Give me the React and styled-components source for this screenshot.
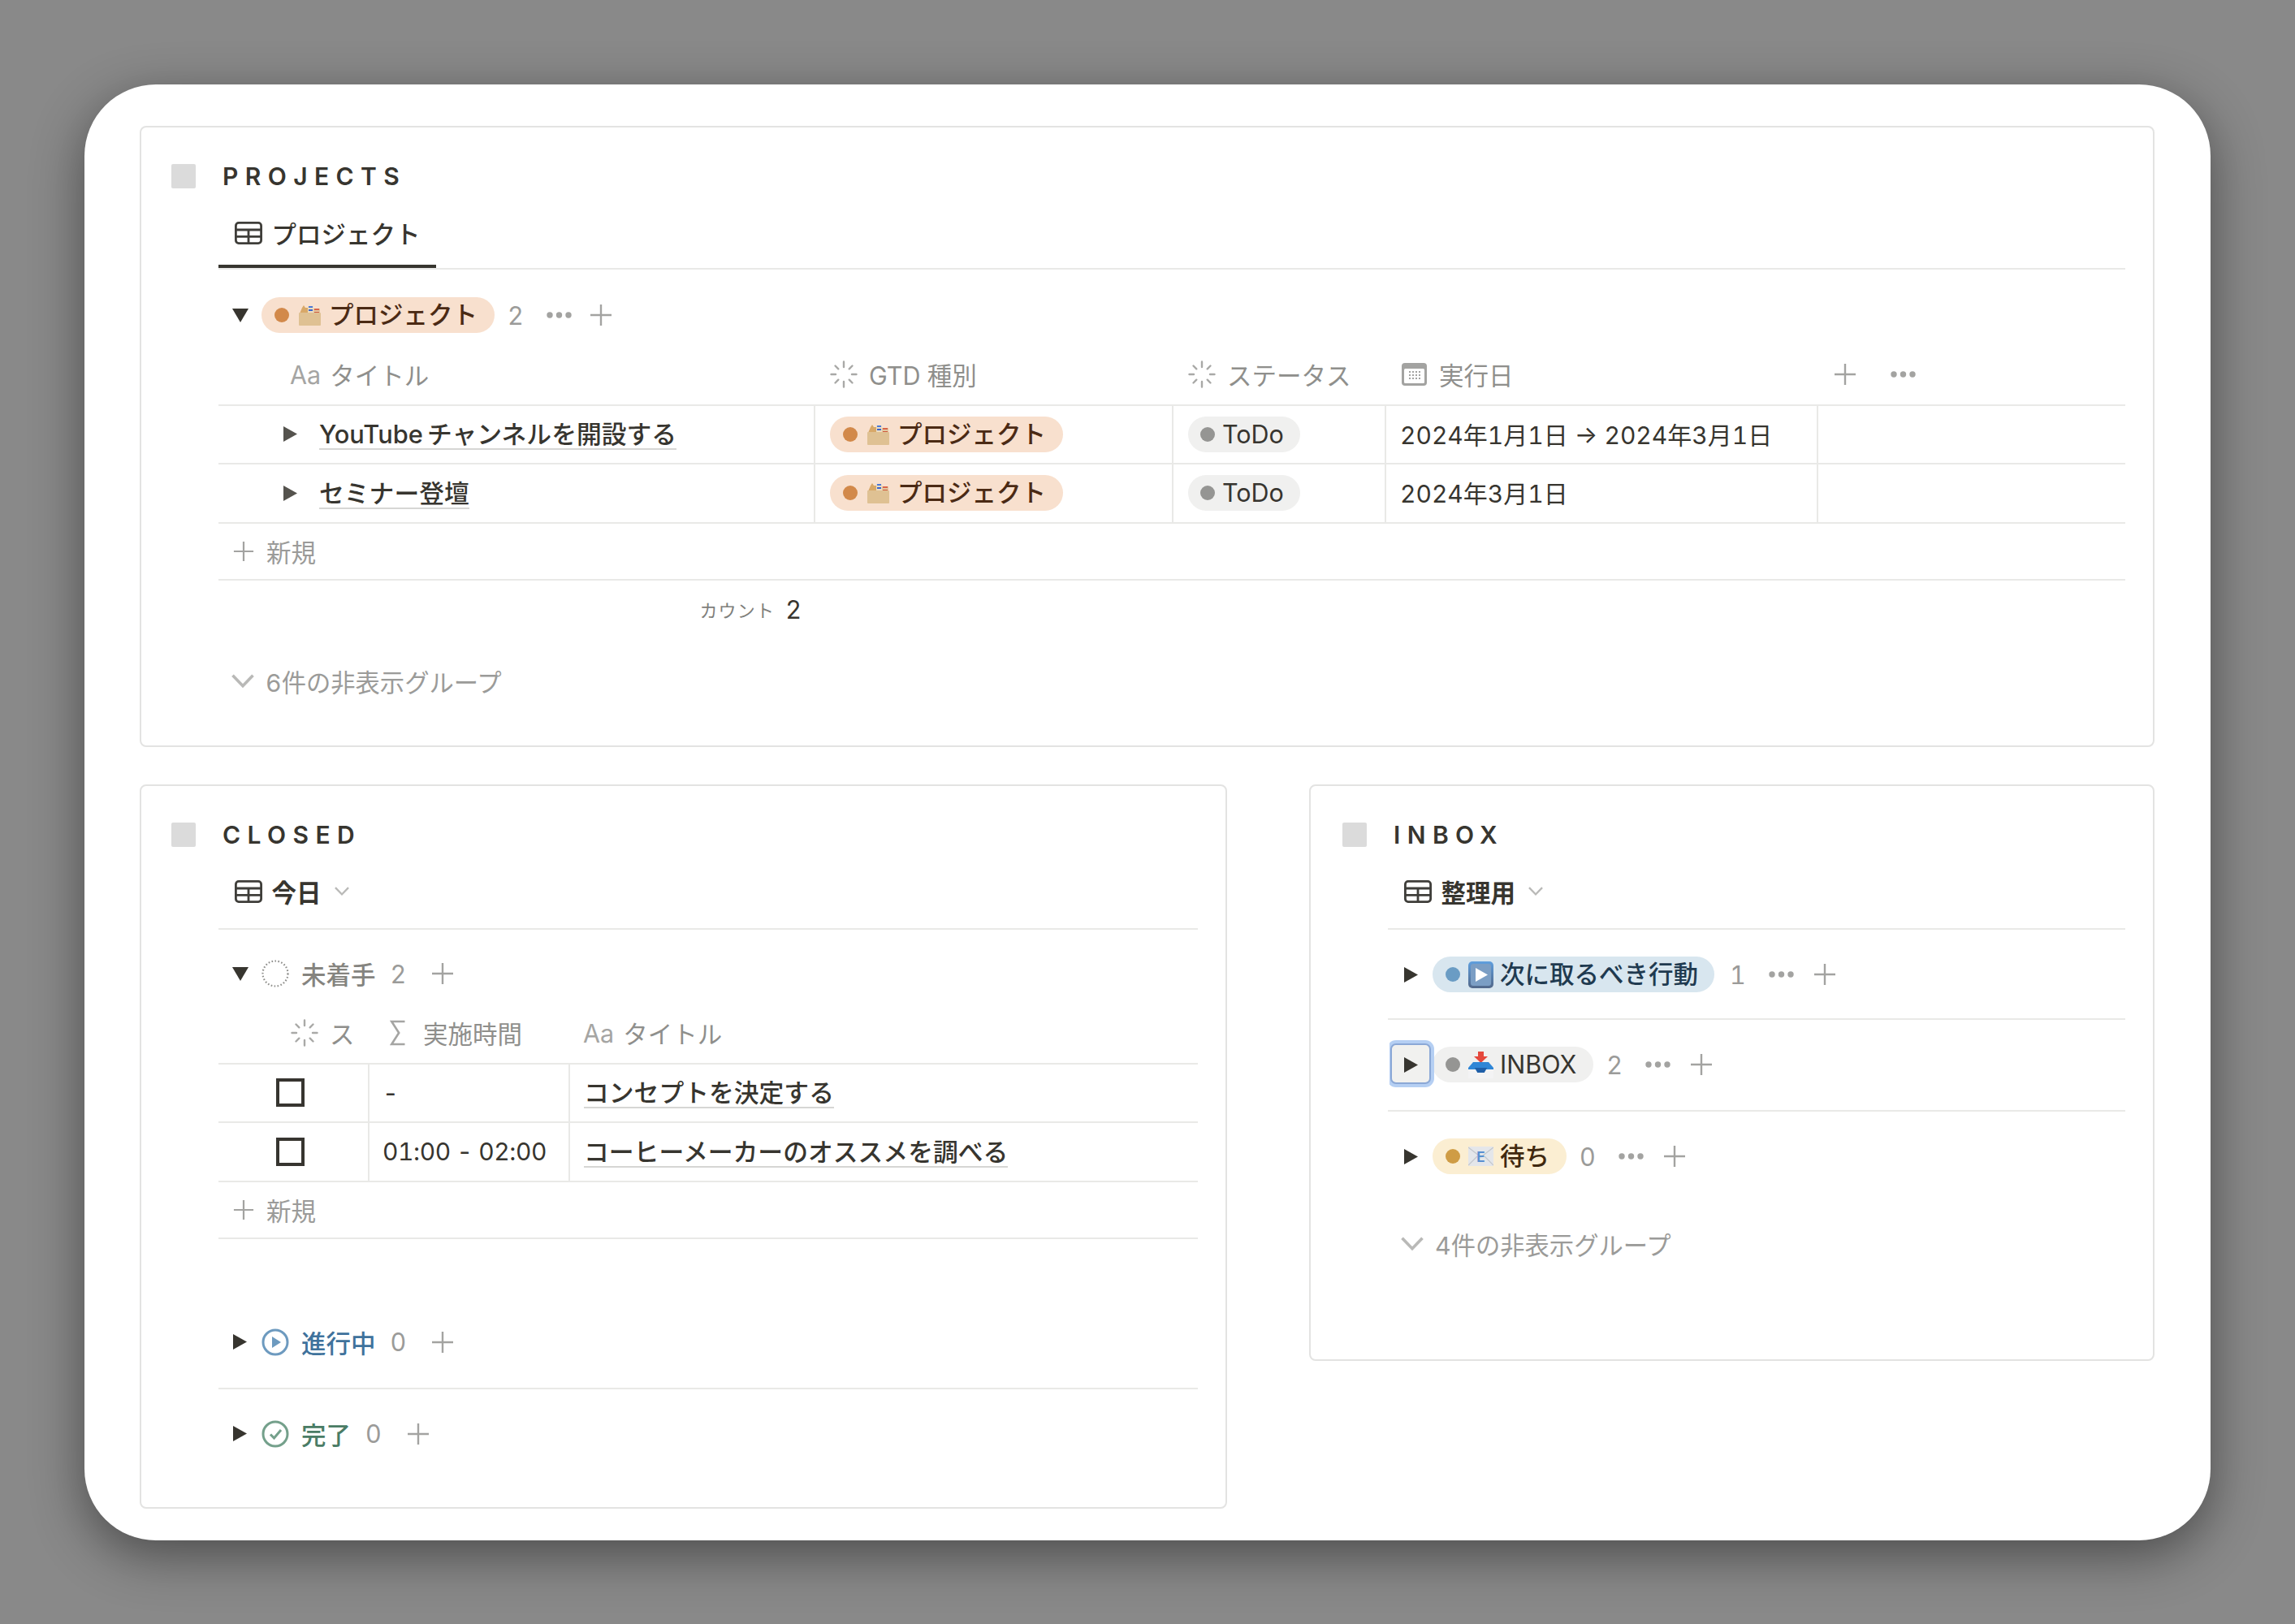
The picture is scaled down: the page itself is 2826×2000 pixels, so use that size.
import React from "react";
import styled, { createGlobalStyle } from "styled-components";

const Global = createGlobalStyle`
  html, body { margin: 0; padding: 0; background: #898989; }
  body {
    font-family: Inter, "Noto Sans CJK JP", sans-serif;
    font-variant-numeric: tabular-nums;
    color: #37352f;
    -webkit-font-smoothing: antialiased;
  }
  * { box-sizing: border-box; }
`;

const Page = styled.div`
  width: 2826px;
  height: 2000px;
  padding: 104px;
  overflow: hidden;
`;
const Card = styled.main`
  width: 2618px;
  height: 1793px;
  background: #fff;
  border-radius: 88px;
  padding: 51px 69px 0 68px;
  box-shadow: 0 18px 64px rgba(0, 0, 0, 0.45);
  display: grid;
  grid-template-columns: 1339px 1041px;
  grid-template-rows: 765px auto;
  column-gap: 101px;
  row-gap: 46px;
  align-items: start;
`;
const Panel = styled.section`
  border: 2px solid #e3e3e2;
  border-radius: 8px;
  padding: 45px 34px 0 37px;
  height: ${(p) => p.$h}px;
  grid-column: ${(p) => p.$span || "auto"};
`;
const PanelHead = styled.header`
  display: flex;
  align-items: center;
  gap: 33px;
  height: 30px;
  padding-left: ${(p) => p.$pl ?? 0}px;
`;
const Square = styled.span`
  width: 30px;
  height: 30px;
  background: #dbdbdb;
  border-radius: 2px;
`;
const PanelTitle = styled.h2`
  margin: 0;
  font-size: 30px;
  font-weight: 600;
  letter-spacing: 8.4px;
  line-height: 30px;
  color: #37352f;
`;
const Body = styled.div`
  margin-left: 58px;
`;
const TabBar = styled.div`
  display: flex;
  align-items: flex-end;
  height: ${(p) => p.$h ?? 102}px;
  border-bottom: 2px solid #e9e9e7;
`;
const Tab = styled.div`
  display: flex;
  align-items: center;
  gap: 12px;
  height: 80px;
  padding: 0 19.5px ${(p) => (p.$active ? 3 : 6)}px 19.5px;
  font-size: 30.5px;
  font-weight: ${(p) => (p.$active ? 500 : 600)};
  border-bottom: 4px solid ${(p) => (p.$active ? "#37352f" : "transparent")};
  color: #37352f;
`;
const Group = styled.div`
  display: flex;
  align-items: center;
  height: 44px;
  margin-top: ${(p) => p.$top ?? 33}px;
  padding-left: ${(p) => p.$pl ?? 0}px;
  box-sizing: content-box;
  ${(p) => p.$line != null && `padding-bottom: ${p.$line}px; border-bottom: 2px solid #e9e9e7;`}
`;
const Toggle = styled.span`
  position: relative;
  flex: none;
  width: 53px;
  height: 44px;
  display: flex;
  align-items: center;
  justify-content: center;
  z-index: 1;
  ${(p) =>
    p.$focus &&
    `
    &::before {
      content: "";
      position: absolute;
      left: 1px;
      right: 2px;
      top: -4px;
      bottom: -2px;
      background: #f1f1ef;
      border: 2px solid #8ba8d6;
      border-radius: 7px;
      box-shadow: 0 0 0 4px #b5cff3;
      clip-path: inset(-6px -6px -6px -1px);
    }
    svg { position: relative; }
  `}
`;
const Pill = styled.span`
  display: inline-flex;
  flex: none;
  align-items: center;
  height: 44px;
  border-radius: 22px;
  padding: 0 ${(p) => p.$pr ?? 21}px 0 ${(p) => p.$pl ?? 16}px;
  background: ${(p) => p.$bg};
  color: ${(p) => p.$fg};
  font-size: 30.5px;
  font-weight: ${(p) => p.$w ?? 500};
  line-height: 44px;
  white-space: nowrap;
`;
const Dot = styled.i`
  flex: none;
  width: 18px;
  height: 18px;
  border-radius: 50%;
  background: ${(p) => p.$c};
  margin-right: ${(p) => p.$mr ?? 10}px;
`;
const EmojiSlot = styled.span`
  flex: none;
  width: 31px;
  height: 34px;
  margin-right: 8px;
  display: flex;
  align-items: center;
  justify-content: center;
`;
const Count = styled.span`
  margin-left: ${(p) => p.$ml ?? 16}px;
  font-size: 30.5px;
  color: #9b9b99;
  font-weight: 400;
`;
const Dots = styled.svg`
  margin-left: ${(p) => p.$ml ?? 28}px;
  flex: none;
`;
const PlusBox = styled.svg`
  margin-left: ${(p) => p.$ml ?? 22}px;
  flex: none;
`;
const StatusLabel = styled.span`
  margin-left: 15px;
  font-size: 30.5px;
  font-weight: 500;
  color: ${(p) => p.$c};
  white-space: nowrap;
`;
const HeadRow = styled.div`
  display: grid;
  grid-template-columns: ${(p) => p.$cols};
  height: 72.5px;
  margin-top: ${(p) => p.$top ?? 17}px;
  border-bottom: 2px solid #e9e9e7;
  font-size: 30.5px;
  color: #8f8f8c;
`;
const HeadCell = styled.div`
  display: flex;
  align-items: center;
  gap: ${(p) => p.$gap ?? 14}px;
  padding-left: ${(p) => p.$pl}px;
  padding-bottom: 2px;
`;
const AaMark = styled.span`
  color: #a5a5a3;
`;
const Row = styled.div`
  display: grid;
  grid-template-columns: ${(p) => p.$cols};
  height: 72.5px;
  border-bottom: 2px solid #e9e9e7;
  font-size: 30.5px;
`;
const Cell = styled.div`
  display: flex;
  align-items: center;
  padding-left: ${(p) => p.$pl ?? 18}px;
  ${(p) => !p.$first && "border-left: 2px solid #e9e9e7;"}
  white-space: nowrap;
`;
const DateText = styled.span`
  font-size: 30px;
  margin-bottom: 2px;
`;
const TimeText = styled.span`
  font-size: 30px;
  letter-spacing: -0.4px;
`;
const Linked = styled.span`
  font-weight: 500;
  font-size: 30.8px;
  line-height: 34px;
  word-spacing: -3px;
  border-bottom: 2px solid #d6d6d4;
  margin-top: 3px;
  margin-left: ${(p) => p.$ml ?? 0}px;
`;
const NewRow = styled.div`
  display: flex;
  align-items: center;
  gap: 15px;
  height: 70px;
  padding-left: 18px;
  border-bottom: 2px solid #e9e9e7;
  font-size: 30.5px;
  color: #9b9b99;
`;
const CountRow = styled.div`
  display: flex;
  align-items: center;
  justify-content: flex-end;
  width: 733px;
  height: 71px;
  padding-right: 15px;
  gap: 13px;
`;
const CountLabel = styled.span`
  font-size: 22px;
  letter-spacing: 1.200px;
  color: #7f7f7c;
`;
const CountValue = styled.span`
  font-size: 30.5px;
  color: #37352f;
`;
const HiddenRow = styled.div`
  display: flex;
  align-items: center;
  gap: 14px;
  height: 44px;
  margin-top: ${(p) => p.$top}px;
  padding-left: 16px;
  font-size: 30.3px;
  color: #9b9b99;
`;
const CheckBox = styled.span`
  width: 35px;
  height: 35px;
  border: 4px solid #373530;
`;
const TabChevron = styled.svg`
  margin-left: 4px;
`;

const TableIcon = () => (
  <svg width="34" height="28" viewBox="0 0 34 28" fill="none" stroke="#3f3e3a" strokeWidth="2.8">
    <rect x="1.4" y="1.4" width="31.2" height="25.2" rx="3.5" />
    <path d="M1.4 10h31.2M1.4 18.4h31.2M17 10v16.600" />
  </svg>
);
const Spinner = () => (
  <svg width="34" height="34" viewBox="0 0 34 34" stroke="#a9a9a7" strokeWidth="2.4" strokeLinecap="round">
    <path d="M17 1.5v6.5M17 26v6.5M1.5 17h5.5M27 17h5.5" />
    <path d="M6.5 6.5l3.8 3.8M27.5 6.5l-3.8 3.8M6.5 27.5l3.8-3.8M27.5 27.5l-3.8-3.8" />
  </svg>
);
const CalendarIcon = () => (
  <svg width="31" height="28" viewBox="0 0 31 28">
    <rect x="0" y="0" width="31" height="28" rx="4" fill="#a3a3a1" />
    <rect x="3" y="7" width="25" height="18" rx="1.5" fill="#fff" />
    <g fill="#a3a3a1">
      {[9, 13, 17, 21].flatMap((x) =>
        [10, 14, 18].map((y) => <rect key={x + "-" + y} x={x} y={y} width="2" height="2" />)
      )}
    </g>
  </svg>
);
const SigmaIcon = () => (
  <svg width="19" height="32" viewBox="0 0 19 32" fill="none" stroke="#a5a5a3" strokeWidth="2.6">
    <path d="M18.5 2H2.2l9 14-9 14h16.3" />
  </svg>
);
const DownTri = () => (
  <svg width="20" height="17" viewBox="0 0 20 17">
    <path d="M0 0h20L10 17z" fill="#37352f" />
  </svg>
);
const RightTri = ({ c = "#37352f" }) => (
  <svg width="17" height="19" viewBox="0 0 17 19">
    <path d="M0 0l17 9.5L0 19z" fill={c} />
  </svg>
);
const Plus = ({ ml, size = 28 }) => (
  <PlusBox $ml={ml} width={size} height={size} viewBox="0 0 28 28" stroke="#a3a3a1" strokeWidth="2.4">
    <path d="M14 1v26M1 14h26" />
  </PlusBox>
);
const Ellipsis = ({ ml, w = 31 }) => (
  <Dots $ml={ml} width={w} height="8" viewBox="0 0 31 8" fill="#a3a3a1">
    <circle cx="4" cy="4" r="3.7" />
    <circle cx="15.5" cy="4" r="3.7" />
    <circle cx="27" cy="4" r="3.7" />
  </Dots>
);
const Chevron = ({ w = 28, c = "#b9b9b7", className }) => (
  <svg className={className} width={w} height={w * 0.62} viewBox="0 0 28 17" fill="none" stroke={c} strokeWidth="3.6">
    <path d="M1.5 1.5L14 14.5 26.500 1.500" />
  </svg>
);
const BoxEmoji = () => (
  <svg width="27" height="26" viewBox="0 0 27 26">
    <path d="M1 11l3-7 2-3 2 3h3v7z" fill="#d8a868" />
    <rect x="11" y="2" width="7" height="9" fill="#ecdcc0" />
    <rect x="18" y="5" width="8" height="6" fill="#e3c7a0" />
    <rect x="12" y="2" width="5" height="2" fill="#4a78d8" />
    <rect x="12" y="6" width="5" height="2" fill="#3c63c9" />
    <rect x="19" y="5" width="6" height="2" fill="#d9654a" />
    <rect x="19" y="9" width="6" height="2" fill="#cf5a3e" />
    <rect x="0" y="10" width="27" height="16" rx="1" fill="#dfc193" />
  </svg>
);
const PlayEmoji = () => (
  <svg width="31" height="33" viewBox="0 0 31 33">
    <defs>
      <linearGradient id="pg" x1="0" y1="0" x2="0" y2="1">
        <stop offset="0" stopColor="#5f9fde" />
        <stop offset="1" stopColor="#52688a" />
      </linearGradient>
    </defs>
    <rect width="31" height="33" rx="5" fill="url(#pg)" />
    <rect x="3" y="3" width="25" height="27" rx="3" fill="#7b9ec4" />
    <path d="M9 8l15 8.500L9 25z" fill="#fff" />
  </svg>
);
const TrayEmoji = () => (
  <svg width="31" height="33" viewBox="0 0 31 33">
    <path d="M12 0h7v6h5l-8.500 8L7 6h5z" fill="#e5483c" />
    <path d="M0 20l6-7h19l6 7v4H0z" fill="#2f86d6" />
    <path d="M8 20h15l-3 6h-9z" fill="#1f5fa8" />
    <path d="M0 22h9l2 4h9l2-4h9v11H0z" fill="#f3f3f4" />
  </svg>
);
const MailEmoji = () => (
  <svg width="31" height="24" viewBox="0 0 31 24">
    <rect width="31" height="24" rx="1.500" fill="#e4e6ea" />
    <path d="M0 1l15.500 12L31 1M0 23l11-11M31 23L20 12" stroke="#c2c6cc" strokeWidth="1.200" fill="none" />
    <text x="15.500" y="19" textAnchor="middle" fontSize="17" fontWeight="700" fill="#5a8fd0" fontFamily="Inter">E</text>
  </svg>
);
const DottedCircle = () => (
  <svg width="34" height="34" viewBox="0 0 34 34" fill="none">
    <circle cx="17" cy="17" r="15.500" stroke="#8f8f8c" strokeWidth="2.200" strokeDasharray="1.600 2.400" />
  </svg>
);
const PlayCircle = () => (
  <svg width="34" height="34" viewBox="0 0 34 34" fill="none">
    <circle cx="17" cy="17" r="15" stroke="#6d9abf" strokeWidth="3" />
    <path d="M13 10l11 7-11 7z" fill="#6d9abf" />
  </svg>
);
const CheckCircle = () => (
  <svg width="34" height="34" viewBox="0 0 34 34" fill="none">
    <circle cx="17" cy="17" r="15" stroke="#74a08b" strokeWidth="3" />
    <path d="M11 17.500l4.500 4.500L24 12" stroke="#74a08b" strokeWidth="3" />
  </svg>
);

const orange = { bg: "#f8e0ce", fg: "#4b2a14" };
const ProjectPill = () => (
  <Pill $bg={orange.bg} $fg={orange.fg}>
    <Dot $c="#d2894a" />
    <EmojiSlot><BoxEmoji /></EmojiSlot>
    プロジェクト
  </Pill>
);
const TodoPill = () => (
  <Pill $bg="#f0f0ef" $fg="#37352f" $pl={15} $pr={20} $w={400}>
    <Dot $c="#959593" $mr={9} />
    ToDo
  </Pill>
);

const projectCols = "733px 441px 262px 532px 1fr";
const closedCols = "184px 247px 1fr";

export default function App() {
  return (
    <Page>
      <Global />
      <Card>
        <Panel $h={765} $span="1 / -1">
          <PanelHead>
            <Square />
            <PanelTitle>PROJECTS</PanelTitle>
          </PanelHead>
          <Body>
            <TabBar $h={100}>
              <Tab $active>
                <TableIcon />
                プロジェクト
              </Tab>
            </TabBar>
            <Group $top={34}>
              <Toggle><DownTri /></Toggle>
              <ProjectPill />
              <Count>2</Count>
              <Ellipsis />
              <Plus />
            </Group>
            <HeadRow $cols={projectCols} $top={17}>
              <HeadCell $pl={88} $gap={11}>
                <AaMark>Aa</AaMark>タイトル
              </HeadCell>
              <HeadCell $pl={20}><Spinner />GTD 種別</HeadCell>
              <HeadCell $pl={20}><Spinner />ステータス</HeadCell>
              <HeadCell $pl={21} $gap={15}><CalendarIcon />実行日</HeadCell>
              <HeadCell $pl={21} $gap={0}>
                <Plus ml={0} />
                <Ellipsis ml={42} />
              </HeadCell>
            </HeadRow>
            <Row $cols={projectCols}>
              <Cell $first $pl={80}>
                <RightTri c="#55534e" />
                <Linked $ml={27}>YouTube チャンネルを開設する</Linked>
              </Cell>
              <Cell><ProjectPill /></Cell>
              <Cell><TodoPill /></Cell>
              <Cell $pl={17}><DateText>2024年1月1日 → 2024年3月1日</DateText></Cell>
              <Cell />
            </Row>
            <Row $cols={projectCols}>
              <Cell $first $pl={80}>
                <RightTri c="#55534e" />
                <Linked $ml={27}>セミナー登壇</Linked>
              </Cell>
              <Cell><ProjectPill /></Cell>
              <Cell><TodoPill /></Cell>
              <Cell $pl={17}><DateText>2024年3月1日</DateText></Cell>
              <Cell />
            </Row>
            <NewRow><Plus ml={0} size={26} />新規</NewRow>
            <CountRow>
              <CountLabel>カウント</CountLabel>
              <CountValue>2</CountValue>
            </CountRow>
            <HiddenRow $top={31}><Chevron />6件の非表示グループ</HiddenRow>
          </Body>
        </Panel>

        <Panel $h={892}>
          <PanelHead>
            <Square />
            <PanelTitle>CLOSED</PanelTitle>
          </PanelHead>
          <Body>
            <TabBar>
              <Tab>
                <TableIcon />
                今日
                <TabChevron as={Chevron} w={18} />
              </Tab>
            </TabBar>
            <Group $top={32}>
              <Toggle><DownTri /></Toggle>
              <DottedCircle />
              <StatusLabel $c="#85847f">未着手</StatusLabel>
              <Count $ml={18}>2</Count>
              <Plus ml={31} />
            </Group>
            <HeadRow $cols={closedCols}>
              <HeadCell $pl={89}><Spinner />ス</HeadCell>
              <HeadCell $pl={27} $gap={22}><SigmaIcon />実施時間</HeadCell>
              <HeadCell $pl={18} $gap={11}><AaMark>Aa</AaMark>タイトル</HeadCell>
            </HeadRow>
            <Row $cols={closedCols}>
              <Cell $first $pl={71}><CheckBox /></Cell>
              <Cell $pl={16}>-</Cell>
              <Cell $pl={17}><Linked>コンセプトを決定する</Linked></Cell>
            </Row>
            <Row $cols={closedCols}>
              <Cell $first $pl={71}><CheckBox /></Cell>
              <Cell $pl={16}><TimeText>01:00 - 02:00</TimeText></Cell>
              <Cell $pl={17}><Linked>コーヒーメーカーのオススメを調べる</Linked></Cell>
            </Row>
            <NewRow><Plus ml={0} size={26} />新規</NewRow>
            <Group $top={105} $line={34}>
              <Toggle><RightTri /></Toggle>
              <PlayCircle />
              <StatusLabel $c="#3f729c">進行中</StatusLabel>
              <Count $ml={18}>0</Count>
              <Plus ml={31} />
            </Group>
            <Group>
              <Toggle><RightTri /></Toggle>
              <CheckCircle />
              <StatusLabel $c="#4a7c65">完了</StatusLabel>
              <Count $ml={18}>0</Count>
              <Plus ml={31} />
            </Group>
          </Body>
        </Panel>

        <Panel $h={710}>
          <PanelHead $pl={2}>
            <Square />
            <PanelTitle>INBOX</PanelTitle>
          </PanelHead>
          <Body>
            <TabBar>
              <Tab>
                <TableIcon />
                整理用
                <TabChevron as={Chevron} w={18} />
              </Tab>
            </TabBar>
            <Group $line={32} $pl={2}>
              <Toggle><RightTri /></Toggle>
              <Pill $bg="#d8e6ef" $fg="#1f3a50" $pr={20}>
                <Dot $c="#6a9cc4" />
                <EmojiSlot><PlayEmoji /></EmojiSlot>
                次に取るべき行動
              </Pill>
              <Count $ml={19}>1</Count>
              <Ellipsis />
              <Plus ml={24} />
            </Group>
            <Group $line={34} $pl={2}>
              <Toggle $focus><RightTri /></Toggle>
              <Pill $bg="#f0f0ef" $fg="#37352f" $pr={21} $w={400}>
                <Dot $c="#959593" />
                <EmojiSlot><TrayEmoji /></EmojiSlot>
                INBOX
              </Pill>
              <Count>2</Count>
              <Ellipsis />
              <Plus ml={24} />
            </Group>
            <Group $pl={2}>
              <Toggle><RightTri /></Toggle>
              <Pill $bg="#fbeed2" $fg="#40290f">
                <Dot $c="#cf9c45" />
                <EmojiSlot><MailEmoji /></EmojiSlot>
                待ち
              </Pill>
              <Count>0</Count>
              <Ellipsis />
              <Plus ml={24} />
            </Group>
            <HiddenRow $top={64}><Chevron />4件の非表示グループ</HiddenRow>
          </Body>
        </Panel>
      </Card>
    </Page>
  );
}
